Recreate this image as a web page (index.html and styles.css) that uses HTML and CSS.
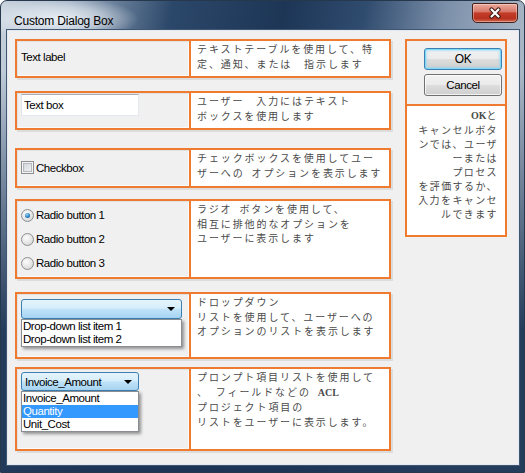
FILE: index.html
```html
<!DOCTYPE html>
<html lang="ja">
  <head>
    <meta charset="utf-8">
    <title>Custom Dialog Box</title>
    <link rel="stylesheet" href="styles.css">
  </head>
  <body>
    <div class="window">
      <div class="titlebar">
        <span class="title">Custom Dialog Box</span>
        <button class="close" aria-label="Close">
          <svg width="14" height="12" viewBox="0 0 14 12">
            <path d="M3.5 2.5 L10.5 9.5 M10.5 2.5 L3.5 9.5" stroke="#3b1710" stroke-width="4.2" stroke-linecap="round"/>
            <path d="M3.5 2.5 L10.5 9.5 M10.5 2.5 L3.5 9.5" stroke="#ffffff" stroke-width="2.2" stroke-linecap="round"/>
          </svg>
        </button>
      </div>

      <div class="client">
        <div class="rows">

          <div class="row r1">
            <div class="ctrl">Text label</div>
            <div class="desc">テキストテーブルを使用して、特<br>定、通知、または　指示します</div>
          </div>

          <div class="row r2">
            <div class="ctrl">
              <div class="textbox">Text box</div>
            </div>
            <div class="desc">ユーザー　入力にはテキスト<br>ボックスを使用します</div>
          </div>

          <div class="row r3">
            <div class="ctrl">
              <label class="opt"><span class="check"></span>Checkbox</label>
            </div>
            <div class="desc">チェックボックスを使用してユー<br>ザーへの&ensp;オプションを表示します</div>
          </div>

          <div class="row r4">
            <div class="ctrl">
              <label class="opt radio-line"><span class="radio on"></span>Radio button 1</label>
              <label class="opt radio-line"><span class="radio"></span>Radio button 2</label>
              <label class="opt radio-line"><span class="radio"></span>Radio button 3</label>
            </div>
            <div class="desc">ラジオ&ensp;ボタンを使用して、<br>相互に排他的なオプションを<br>ユーザーに表示します</div>
          </div>

          <div class="row r5">
            <div class="ctrl">
              <div class="combo wide"><span class="arrow"></span></div>
              <ul class="list wide">
                <li>Drop-down list item 1</li>
                <li>Drop-down list item 2</li>
              </ul>
            </div>
            <div class="desc">ドロップダウン<br>リストを使用して、ユーザーへの<br>オプションのリストを表示します</div>
          </div>

          <div class="row r6">
            <div class="ctrl">
              <div class="combo narrow">Invoice_Amount<span class="arrow"></span></div>
              <ul class="list narrow">
                <li>Invoice_Amount</li>
                <li class="selected">Quantity</li>
                <li>Unit_Cost</li>
              </ul>
            </div>
            <div class="desc">プロンプト項目リストを使用して<br>、&ensp;フィールドなどの&ensp;<span class="lat">ACL</span><br>プロジェクト項目の<br>リストをユーザーに表示します。</div>
          </div>

        </div>

        <div class="side">
          <div class="side-btns">
            <button class="btn ok">OK</button>
            <button class="btn">Cancel</button>
          </div>
          <div class="side-desc"><span class="lat">OK</span>と<br>キャンセルボタ<br>ンでは、ユーザ<br>ーまたは<br>プロセス<br>を評価するか、<br>入力をキャンセ<br>ルできます</div>
        </div>
      </div>
    </div>
  </body>
</html>
```

FILE: styles.css
```css
html, body {
  margin: 0;
  padding: 0;
}

body {
  width: 525px;
  height: 473px;
  overflow: hidden;
  font-family: "Liberation Sans", Arial, sans-serif;
  font-size: 11.5px;
  letter-spacing: -0.45px;
  color: #000;
}

/* window frame */
.window {
  width: 525px;
  height: 473px;
  box-sizing: border-box;
  border: 1px solid #27374c;
  border-radius: 7px 7px 0 0;
  padding: 0 5px 7px 6px;
  background:
    radial-gradient(ellipse 80px 22px at 58px 18px, rgba(236, 241, 246, 0.95) 0%, rgba(236, 241, 246, 0.55) 55%, rgba(236, 241, 246, 0) 100%),
    linear-gradient(180deg, rgba(29, 53, 85, 0) 0px, rgba(29, 53, 85, 0) 70px, rgba(29, 53, 85, 0.95) 330px),
    linear-gradient(100deg, #c9d3de 0px, #98aabf 70px, #2b4769 170px, #1d3656 280px, #2f4b6e 360px, #7c90aa 440px, #a9b7c7 525px);
}

.titlebar {
  display: flex;
  height: 29px;
}

.title {
  padding: 12px 0 0 7px;
  line-height: 16px;
  font-size: 12px;
  letter-spacing: -0.2px;
}

.close {
  width: 46px;
  height: 20px;
  margin: 2px 1px 0 auto;
  padding: 0;
  box-sizing: border-box;
  border: 1px solid #47201a;
  border-radius: 2px 2px 5px 5px;
  background: linear-gradient(#eaa99b 0%, #d87a6c 42%, #c43d2b 50%, #b7311f 80%, #d36a52 100%);
  box-shadow: inset 0 0 0 1px rgba(255, 255, 255, 0.35);
  display: flex;
  align-items: center;
  justify-content: center;
}

/* client area */
.client {
  display: flex;
  align-items: flex-start;
  height: 435px;
  box-sizing: border-box;
  border: 1px solid #e4e9ef;
  box-shadow: 0 0 0 1px #3f5674;
  background: #f0f0f0;
  padding: 8px 0 0 7px;
}

.rows {
  width: 376px;
}

.row {
  display: flex;
  box-shadow: 2px 2px 0 #dcdcdc;
}

.r1 { height: 39px; }
.r2 { height: 39px; margin-top: 13px; }
.r3 { height: 40px; margin-top: 18px; }
.r4 { height: 80px; margin-top: 11px; }
.r5 { height: 67px; margin-top: 13px; }
.r6 { height: 84px; margin-top: 8px; }

.ctrl {
  width: 174px;
  box-sizing: border-box;
  border: 2px solid #ee7b30;
  border-right: 0;
  background: #f0f0f0;
  box-shadow: inset 1px 1px 0 #e2e2e2, inset -1px -1px 0 #fafafa;
  padding: 0 0 0 4px;
  line-height: 14px;
}

.r1 .ctrl { padding-top: 9px; }
.r2 .ctrl { padding-top: 1px; }
.r3 .ctrl { padding-top: 11px; }
.r4 .ctrl { padding-top: 2px; }
.r5 .ctrl { padding-top: 5px; }
.r6 .ctrl { padding-top: 3px; }

.desc {
  flex: 1;
  background: #fff;
  border: 2px solid #ee7b30;
  padding: 1px 0 0 6px;
  font-family: "Noto Sans CJK JP", sans-serif;
  font-size: 10px;
  letter-spacing: 1.9px;
  line-height: 14.5px;
  color: #4a4a4a;
  white-space: nowrap;
}

.lat {
  font-family: "Liberation Serif", serif;
  font-weight: bold;
  letter-spacing: 0;
}

/* controls */
.textbox {
  width: 118px;
  height: 22px;
  box-sizing: border-box;
  border: 1px solid #abadb3;
  border-color: #abadb3 #e3e9ef #e3e9ef #e2e3ea;
  background: #fff;
  padding: 3px 0 0 2px;
}

.opt {
  display: flex;
  align-items: center;
  gap: 2px;
  height: 13px;
}

.radio-line {
  height: 24px;
}

.check {
  width: 13px;
  height: 13px;
  box-sizing: border-box;
  border: 1px solid #8e8f8f;
  background: linear-gradient(135deg, #cdd1d6, #f6f6f6);
  box-shadow: inset 0 0 0 1px #f4f4f4, inset 0 0 0 2px #b5b9bf;
}

.radio {
  position: relative;
  width: 13px;
  height: 13px;
  box-sizing: border-box;
  border: 1px solid #8c8e90;
  border-radius: 50%;
  background: radial-gradient(circle at 40% 35%, #fdfdfd 0%, #e2e2e2 60%, #c9c9c9 100%);
}

.radio.on::after {
  content: "";
  position: absolute;
  left: 3px;
  top: 3px;
  width: 5px;
  height: 5px;
  border-radius: 50%;
  background: radial-gradient(circle at 40% 35%, #9ad8fa 0%, #2278bb 60%, #17507f 100%);
}

.combo {
  display: flex;
  align-items: center;
  box-sizing: border-box;
  border: 1px solid #3c7fb1;
  border-radius: 3px;
  background: linear-gradient(#e6f4fc 0%, #d6eefb 45%, #bfe3f8 52%, #a6d3f1 100%);
  padding: 0 0 0 3px;
}

.combo.wide {
  width: 161px;
  height: 20px;
}

.combo.narrow {
  width: 118px;
  height: 19px;
}

.arrow {
  margin-left: auto;
  margin-right: 6px;
  border-left: 4px solid transparent;
  border-right: 4px solid transparent;
  border-top: 4px solid #000;
}

.list {
  list-style: none;
  margin: 0;
  padding: 0;
  box-sizing: border-box;
  background: #fff;
  border: 1px solid #8a8d92;
  box-shadow: 2px 2px 3px rgba(0, 0, 0, 0.4);
  line-height: 13px;
}

.list.wide { width: 161px; }
.list.narrow { width: 118px; }

.list li {
  padding-left: 1px;
}

.list li.selected {
  background: #3399ff;
  color: #fff;
}

/* right panel */
.side {
  width: 102px;
  height: 198px;
  margin-left: 14px;
  box-sizing: border-box;
  border: 2px solid #ee7b30;
  display: flex;
  flex-direction: column;
}

.side-btns {
  height: 63px;
  box-sizing: border-box;
  display: flex;
  flex-direction: column;
  align-items: flex-end;
  gap: 4px;
  padding: 7px 3px 0 0;
}

.btn {
  width: 78px;
  height: 22px;
  box-sizing: border-box;
  border: 1px solid #707070;
  border-radius: 3px;
  background: linear-gradient(#f2f2f2 0%, #ebebeb 48%, #dddddd 52%, #cfcfcf 100%);
  box-shadow: inset 0 0 0 1px rgba(255, 255, 255, 0.75);
  font-family: "Liberation Sans", Arial, sans-serif;
  font-size: 11.5px;
  letter-spacing: -0.4px;
  color: #000;
  padding: 0;
}

.btn.ok {
  border-color: #3c7fb1;
  box-shadow: inset 0 0 0 1px #7fd8f8, inset 0 0 2px 2px rgba(127, 216, 248, 0.5);
  font-size: 12px;
}

.side-desc {
  flex: 1;
  background: #fff;
  border-top: 2px solid #ee7b30;
  padding: 2px 7px 0 0;
  text-align: right;
  font-family: "Noto Sans CJK JP", sans-serif;
  font-size: 10px;
  letter-spacing: 1.4px;
  line-height: 14px;
  color: #4a4a4a;
  white-space: nowrap;
}
```
